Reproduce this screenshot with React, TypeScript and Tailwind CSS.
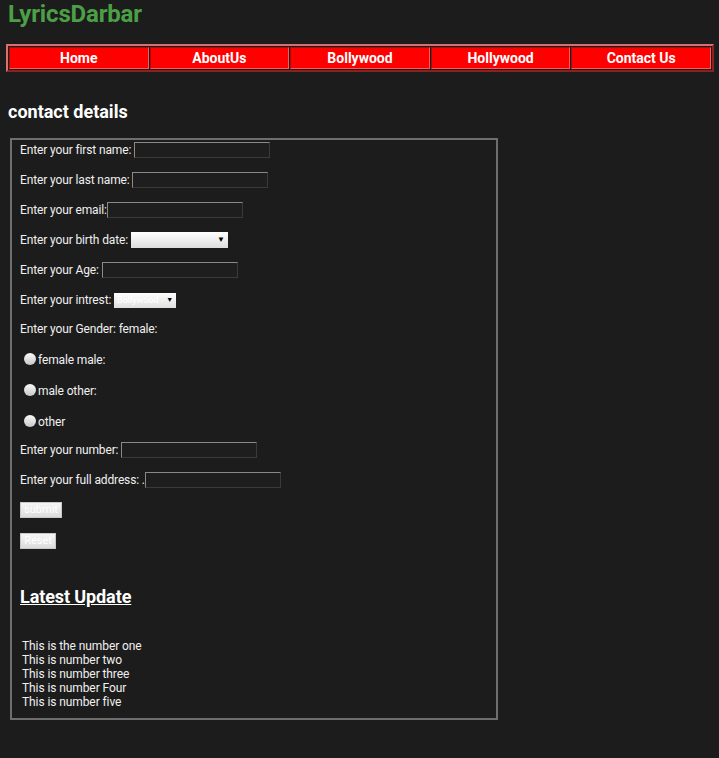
import React from "react";

const font = { fontFamily: "Roboto, 'Noto Sans', Arial, sans-serif" };

function TextInput({ w = "w-[136px]" }: { w?: string }) {
  return (
    <input
      type="text"
      className={`${w} h-[16px] bg-[#1e1e1e] border border-t-[#8a8a8a] border-l-[#8a8a8a] border-r-[#3a3a3a] border-b-[#3a3a3a] border-solid outline-none`}
    />
  );
}

function Radio() {
  return (
    <span className="inline-block w-[12px] h-[12px] rounded-full bg-gradient-to-b from-[#fafafa] to-[#c8c8c8] mr-[2px]" />
  );
}

export default function App() {
  const navItems = ["Home", "AboutUs", "Bollywood", "Hollywood", "Contact Us"];
  return (
    <div className="min-h-[758px] w-full bg-[#1c1c1c] text-white pb-[20px]" style={font}>
      <h1 className="pl-[8px] text-[24px] leading-[28px] font-bold tracking-[-0.17px] text-[#4ba046]">LyricsDarbar</h1>

      <div className="mt-[16px] ml-[6px] w-[708px] border-2 border-t-[#d87070] border-l-[#d87070] border-r-[#8f2020] border-b-[#8f2020] p-px flex gap-px">
        {navItems.map((n) => (
          <div
            key={n}
            className="flex-1 h-[22px] bg-[#ff0000] border border-t-[#a01010] border-l-[#a01010] border-r-[#ff5a5a] border-b-[#ff5a5a] flex items-center justify-center text-[14px] font-bold text-white"
          >
            {n}
          </div>
        ))}
      </div>

      <h3 className="mt-[29px] pl-[8px] text-[18px] leading-[22px] font-bold text-white">contact details</h3>

      <div className="mt-[15px] ml-[10px] w-[488px] border-2 border-[#6e6e6e] pl-[8px] pb-[9px] text-[12px] leading-[14px] tracking-[-0.13px] text-[#f0f0f0]">
        <div className="h-[20px] flex items-center">
          <span>Enter your first name:&nbsp;</span>
          <TextInput />
        </div>
        <div className="mt-[10px] h-[20px] flex items-center">
          <span>Enter your last name:&nbsp;</span>
          <TextInput />
        </div>
        <div className="mt-[10px] h-[20px] flex items-center">
          <span>Enter your email:</span>
          <TextInput />
        </div>
        <div className="mt-[10px] h-[20px] flex items-center">
          <span>Enter your birth date:&nbsp;</span>
          <div className="w-[97px] h-[16px] bg-gradient-to-b from-[#ffffff] to-[#dedede] flex items-center justify-end pr-[3px] text-[8px] text-black">
            ▼
          </div>
        </div>
        <div className="mt-[10px] h-[20px] flex items-center">
          <span>Enter your Age:&nbsp;</span>
          <TextInput />
        </div>
        <div className="mt-[10px] h-[20px] flex items-center">
          <span>Enter your intrest:&nbsp;</span>
          <div className="w-[62px] h-[15px] bg-gradient-to-b from-[#ffffff] to-[#dedede] flex items-center justify-between pl-[3px] pr-[3px] text-[9px] leading-[12px] tracking-normal text-white">
            <span>Bollywood</span>
            <span className="text-[7px] text-black">▼</span>
          </div>
        </div>
        <div className="mt-[9px] h-[20px] flex items-center">
          <span>Enter your Gender: female:</span>
        </div>
        <div className="mt-[10px] h-[20px] flex items-center pl-[4px]">
          <Radio />
          <span className="mt-[2px]">female male:</span>
        </div>
        <div className="mt-[11px] h-[20px] flex items-center pl-[4px]">
          <Radio />
          <span className="mt-[2px]">male other:</span>
        </div>
        <div className="mt-[11px] h-[20px] flex items-center pl-[4px]">
          <Radio />
          <span className="mt-[2px]">other</span>
        </div>
        <div className="mt-[9px] h-[20px] flex items-center">
          <span>Enter your number:&nbsp;</span>
          <TextInput />
        </div>
        <div className="mt-[10px] h-[20px] flex items-center">
          <span>Enter your full address: .</span>
          <TextInput />
        </div>
        <div className="mt-[10px] h-[20px] flex items-center">
          <button className="w-[42px] h-[16px] bg-gradient-to-b from-[#f6f6f6] to-[#dcdcdc] border border-[#c8c8c8] text-[11px] leading-[12px] tracking-normal text-white">
            submit
          </button>
        </div>
        <div className="mt-[11px] h-[20px] flex items-center">
          <button className="w-[36px] h-[16px] bg-gradient-to-b from-[#f6f6f6] to-[#dcdcdc] border border-[#c8c8c8] text-[11px] leading-[12px] tracking-normal text-white">
            Reset
          </button>
        </div>

        <h3 className="mt-[35px] text-[18px] leading-[22px] font-bold underline tracking-[-0.1px] text-white">Latest Update</h3>

        <ul className="mt-[31px] pl-[2px] text-[12px] leading-[14px] tracking-[-0.09px] text-[#f0f0f0]">
          <li>This is the number one</li>
          <li>This is number two</li>
          <li>This is number three</li>
          <li>This is number Four</li>
          <li>This is number five</li>
        </ul>
      </div>
    </div>
  );
}
